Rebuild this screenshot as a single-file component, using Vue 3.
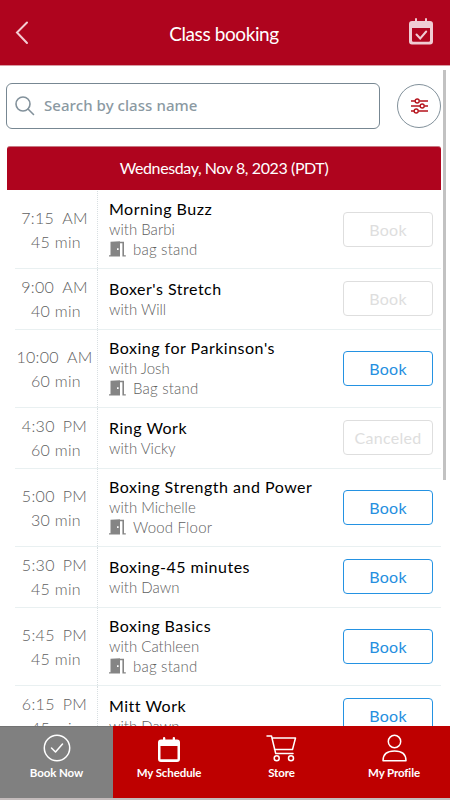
<script setup>
const classes = [
  { time: '7:15', half: 'AM', length: '45 min', name: 'Morning Buzz', coach: 'Barbi', room: 'bag stand', action: 'Book', off: true },
  { time: '9:00', half: 'AM', length: '40 min', name: "Boxer's Stretch", coach: 'Will', action: 'Book', off: true },
  { time: '10:00', half: 'AM', length: '60 min', name: "Boxing for Parkinson's", coach: 'Josh', room: 'Bag stand', action: 'Book' },
  { time: '4:30', half: 'PM', length: '60 min', name: 'Ring Work', coach: 'Vicky', action: 'Canceled', off: true },
  { time: '5:00', half: 'PM', length: '30 min', name: 'Boxing Strength and Power', coach: 'Michelle', room: 'Wood Floor', action: 'Book' },
  { time: '5:30', half: 'PM', length: '45 min', name: 'Boxing-45 minutes', coach: 'Dawn', action: 'Book' },
  { time: '5:45', half: 'PM', length: '45 min', name: 'Boxing Basics', coach: 'Cathleen', room: 'bag stand', action: 'Book' },
  { time: '6:15', half: 'PM', length: '45 min', name: 'Mitt Work', coach: 'Dawn', action: 'Book' },
]
</script>

<template>
  <div class="app">
    <header class="topbar">
      <svg class="back" width="14" height="24" viewBox="0 0 14 24"><path d="M12 1.5 2 11.5l10 10.5" /></svg>
      <h1>Class booking</h1>
      <svg class="cal" width="24" height="28" viewBox="0 0 24 28">
        <path fill-rule="evenodd" d="M3 3H6V1.2Q6 0 7 0T8 1.2V3H16V1.2Q16 0 17 0T18 1.2V3H21Q24 3 24 6V23.5Q24 26.5 21 26.5H3Q0 26.5 0 23.5V6Q0 3 3 3ZM3 10V22.5Q3 23.8 4.3 23.8H19.7Q21 23.8 21 22.5V10Z" />
        <path class="tick" d="m7.5 16.5 3.7 4 6-7" />
      </svg>
    </header>

    <main>
      <div class="search-row">
        <div class="search">
          <svg width="20" height="20" viewBox="0 0 20 20"><circle cx="8" cy="8" r="7" /><path d="m13 13 5.5 5.5" /></svg>
          <span>Search by class name</span>
        </div>
        <button class="filter">
          <svg width="17" height="16" viewBox="0 0 17 16">
            <path d="M0 3H4M8.4 3H17M0 8H9M13.4 8H17M0 13H3M7.4 13H17" />
            <circle cx="6.2" cy="3" r="2" /><circle cx="11.2" cy="8" r="2" /><circle cx="5.2" cy="13" r="2" />
          </svg>
        </button>
      </div>

      <h2>Wednesday, Nov 8, 2023 (PDT)</h2>

      <section>
        <article v-for="c in classes" :key="c.time" class="row" :class="{ tall: c.room }">
          <div class="when">
            <div class="time"><span>{{ c.time }}</span><span>{{ c.half }}</span></div>
            <div class="length">{{ c.length }}</div>
          </div>
          <div class="info">
            <h3>{{ c.name }}</h3>
            <p class="coach">with {{ c.coach }}</p>
            <p v-if="c.room" class="room">
              <svg width="17" height="16" viewBox="0 0 17 16">
                <path fill-rule="evenodd" d="M1.5 .8 11 .3V15.5H0V14.3H1.5ZM8 7.2V9H9.6V7.2Z" />
                <path d="M11 .8H15V14.3H16.8V15.5H13.4V2.3H11Z" />
              </svg>
              <span>{{ c.room }}</span>
            </p>
          </div>
          <button class="book" :class="{ off: c.off }">{{ c.action }}</button>
        </article>
      </section>
    </main>
    <div class="scrollbar"></div>

    <nav>
      <a class="active">
        <svg width="30" height="28" viewBox="0 0 30 28"><circle cx="15" cy="14" r="12.7" /><path d="m9.5 14 4 4 7-8" /></svg>
        <span>Book Now</span>
      </a>
      <a>
        <svg width="30" height="28" viewBox="0 0 30 28"><path class="solid" fill-rule="evenodd" d="M7 5.5H9V4Q9 3 10.1 3T11.3 4V5.5H18.7V4Q18.7 3 19.9 3T21 4V5.5H23Q26 5.5 26 8.5V25Q26 28 23 28H7Q4 28 4 25V8.5Q4 5.5 7 5.5ZM6.5 12V25.2H23.5V12Z" /></svg>
        <span>My Schedule</span>
      </a>
      <a>
        <svg width="32" height="28" viewBox="0 0 32 28"><path d="M1 2H5.5L9.7 19.5H27M6 4H29.5L26.5 15.5H8.5" /><circle cx="10.7" cy="24.3" r="2.5" /><circle cx="25" cy="24.3" r="2.5" /></svg>
        <span>Store</span>
      </a>
      <a>
        <svg width="30" height="28" viewBox="0 0 30 28"><circle cx="15.5" cy="7.5" r="6.2" /><path d="M4 26.7C4 20 8.5 17 15.5 17S27 20 27 26.7Z" /></svg>
        <span>My Profile</span>
      </a>
    </nav>
  </div>
</template>

<style>
body { margin: 0; overflow: hidden; background: #fff; }
</style>

<style scoped>
* { box-sizing: border-box; }
.app { position: relative; display: flex; flex-direction: column; width: 450px; height: 800px; overflow: hidden; background: #fff; font-family: Lato, "Noto Sans", sans-serif; color: #000; }
svg { display: block; flex: none; fill: none; }
h1, h2, h3, p { margin: 0; font-weight: 400; }
button { padding: 0; background: #fff; font-family: inherit; }
.topbar { display: flex; flex: none; align-items: center; justify-content: space-between; height: 66px; padding: 0 17px 0 15px; background: #af041e; border-bottom: 1px solid #d99ba3; }
.back path { stroke: #f4ccd3; stroke-width: 2; stroke-linecap: round; }
.topbar h1 { padding: 2px 0 0 10px; color: #fff; font-size: 19px; line-height: 24px; letter-spacing: -.4px; }
.cal { margin-top: -2px; fill: #f0ccd3; }
.cal .tick { fill: none; stroke: #f0ccd3; stroke-width: 2; stroke-linecap: round; }
main { flex: 1; min-height: 0; padding: 17px 9px 0 6px; overflow: hidden; }
.search-row { display: flex; align-items: center; justify-content: space-between; height: 46px; }
.search { display: flex; align-items: center; gap: 9px; width: 374px; height: 46px; padding-left: 8px; border: 1px solid #778792; border-radius: 6px; color: #8b99a2; font-size: 15px; font-weight: 500; letter-spacing: .06px; font-family: "Noto Sans", sans-serif; }
.search span { padding-bottom: 3px; }
.search svg { stroke: #82919b; stroke-width: 1.6; stroke-linecap: round; }
.filter { display: grid; place-items: center; width: 44px; height: 44px; border: 1px solid #82919b; border-radius: 50%; }
.filter svg { stroke: #b5121b; stroke-width: 1.4; }
h2 { height: 44px; margin: 17px 0 0 1px; border-top: 1px solid #c77983; border-radius: 3px 3px 0 0; background: #af041e; color: #fff; font-size: 16px; line-height: 41px; letter-spacing: -.4px; text-align: center; }
section { padding: 1px 0 0 9px; }
.row { display: grid; grid-template-columns: 83px 1fr 90px; height: 61px; padding-right: 8px; border-bottom: 1px solid #e9f0f1; }
.row.tall { height: 78px; }
.when { display: flex; flex-direction: column; justify-content: center; align-items: center; border-right: 1px dotted #d8dfe2; color: #606060; font-size: 16px; font-weight: 300; line-height: 24px; letter-spacing: .3px; white-space: nowrap; }
.time { display: flex; gap: 8px; margin-left: -3px; }
.info { display: flex; flex-direction: column; justify-content: center; padding: 0 0 1px 11px; white-space: nowrap; }
.info h3 { font-size: 16px; line-height: 20px; letter-spacing: .5px; }
.coach { color: #606060; font-size: 15px; font-weight: 300; line-height: 20px; }
.room { display: flex; align-items: center; gap: 7px; height: 21px; color: #606060; font-size: 15px; font-weight: 300; letter-spacing: .2px; }
.room svg { fill: #858585; }
.book { align-self: center; width: 90px; height: 35px; margin-bottom: 1px; border: 1px solid #2492e2; border-radius: 4px; color: #258fe0; font-size: 16px; letter-spacing: .3px; }
.book.off { border-color: #dedede; color: #dedede; }
.scrollbar { position: absolute; right: 4px; top: 70px; width: 3px; height: 410px; background: #c2c2c2; }
nav { display: grid; flex: none; grid-template-columns: 113px 112px 113px 112px; height: 74px; border-bottom: 2px solid #c4bcbc; }
nav a { display: flex; flex-direction: column; align-items: center; padding-top: 8px; background: #be0000; color: #fff; font-size: 11.5px; font-weight: 700; line-height: 16px; letter-spacing: -.1px; }
nav a span { margin-top: 3px; }
nav .active { background: #808080; border-top: 1px solid #737373; padding-top: 7px; }
nav svg { stroke: #fff; stroke-width: 1.5; stroke-linejoin: round; stroke-linecap: round; }
nav .solid { fill: #fff; stroke: none; }
</style>
